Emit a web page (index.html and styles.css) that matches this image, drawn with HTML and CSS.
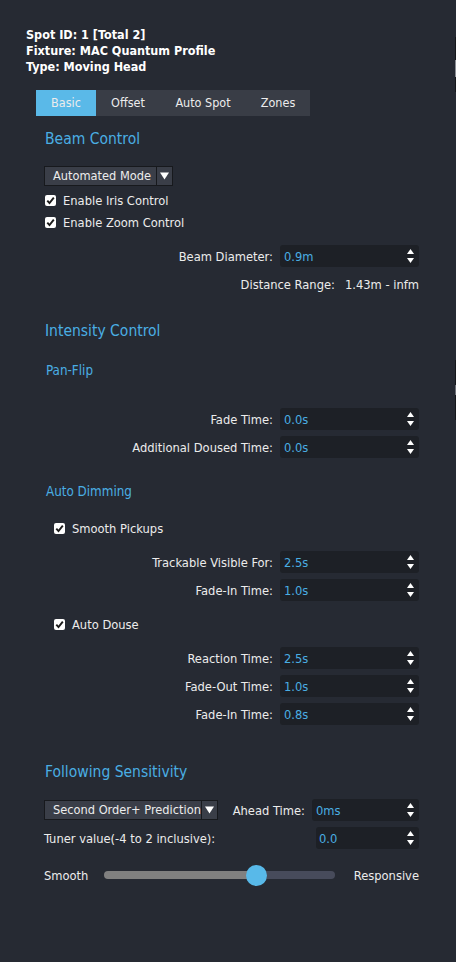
FILE: index.html
```html
<!DOCTYPE html>
<html>
<head>
<meta charset="utf-8">
<link rel="stylesheet" href="styles.css">
</head>
<body>
<div class="edge"><span class="edge-a"></span><span class="edge-b"></span><span class="edge-c"></span><span class="edge-d"></span></div>
<div class="header">
  <div>Spot ID: 1 [Total 2]</div>
  <div>Fixture: MAC Quantum Profile</div>
  <div>Type: Moving Head</div>
</div>
<div class="tabs">
  <div class="tab tab-basic active">Basic</div>
  <div class="tab tab-offset">Offset</div>
  <div class="tab tab-auto">Auto Spot</div>
  <div class="tab tab-zones">Zones</div>
</div>
<div class="content">
  <div class="h1 h1-beam">Beam Control</div>
  <div class="combo combo-mode"><span class="combo-text">Automated Mode</span><span class="combo-btn"><svg width="9" height="8" viewBox="0 0 9 8"><polygon points="0,0.5 9,0.5 4.5,7.5" fill="#fff"/></svg></span></div>
  <div class="check check-first"><span class="box"><svg width="11" height="11" viewBox="0 0 11 11"><path d="M2.3 5.6 L4.5 8.1 L8.8 2.6" fill="none" stroke="#1b1b1b" stroke-width="1.9"/></svg></span>Enable Iris Control</div>
  <div class="check"><span class="box"><svg width="11" height="11" viewBox="0 0 11 11"><path d="M2.3 5.6 L4.5 8.1 L8.8 2.6" fill="none" stroke="#1b1b1b" stroke-width="1.9"/></svg></span>Enable Zoom Control</div>
  <div class="spin-group group-beam">
    <div class="spin-row"><span class="label">Beam Diameter:</span><div class="spin"><span class="val">0.9m</span><svg class="arrows" width="7" height="14" viewBox="0 0 7 14"><polygon points="0,5 3.5,0 7,5" fill="#fff"/><polygon points="0,9 7,9 3.5,14" fill="#fff"/></svg></div></div>
  </div>
  <div class="info-row"><span>Distance Range:</span><span>1.43m - infm</span></div>

  <div class="h1 h1-intensity">Intensity Control</div>
  <div class="h2 h2-panflip">Pan-Flip</div>
  <div class="spin-group group-panflip">
    <div class="spin-row"><span class="label">Fade Time:</span><div class="spin"><span class="val">0.0s</span><svg class="arrows" width="7" height="14" viewBox="0 0 7 14"><polygon points="0,5 3.5,0 7,5" fill="#fff"/><polygon points="0,9 7,9 3.5,14" fill="#fff"/></svg></div></div>
    <div class="spin-row"><span class="label">Additional Doused Time:</span><div class="spin"><span class="val">0.0s</span><svg class="arrows" width="7" height="14" viewBox="0 0 7 14"><polygon points="0,5 3.5,0 7,5" fill="#fff"/><polygon points="0,9 7,9 3.5,14" fill="#fff"/></svg></div></div>
  </div>
  <div class="h2 h2-dimming">Auto Dimming</div>
  <div class="check check-indent check-pickups"><span class="box"><svg width="11" height="11" viewBox="0 0 11 11"><path d="M2.3 5.6 L4.5 8.1 L8.8 2.6" fill="none" stroke="#1b1b1b" stroke-width="1.9"/></svg></span>Smooth Pickups</div>
  <div class="spin-group group-pickups">
    <div class="spin-row"><span class="label">Trackable Visible For:</span><div class="spin"><span class="val">2.5s</span><svg class="arrows" width="7" height="14" viewBox="0 0 7 14"><polygon points="0,5 3.5,0 7,5" fill="#fff"/><polygon points="0,9 7,9 3.5,14" fill="#fff"/></svg></div></div>
    <div class="spin-row"><span class="label">Fade-In Time:</span><div class="spin"><span class="val">1.0s</span><svg class="arrows" width="7" height="14" viewBox="0 0 7 14"><polygon points="0,5 3.5,0 7,5" fill="#fff"/><polygon points="0,9 7,9 3.5,14" fill="#fff"/></svg></div></div>
  </div>
  <div class="check check-indent check-douse"><span class="box"><svg width="11" height="11" viewBox="0 0 11 11"><path d="M2.3 5.6 L4.5 8.1 L8.8 2.6" fill="none" stroke="#1b1b1b" stroke-width="1.9"/></svg></span>Auto Douse</div>
  <div class="spin-group group-douse">
    <div class="spin-row"><span class="label">Reaction Time:</span><div class="spin"><span class="val">2.5s</span><svg class="arrows" width="7" height="14" viewBox="0 0 7 14"><polygon points="0,5 3.5,0 7,5" fill="#fff"/><polygon points="0,9 7,9 3.5,14" fill="#fff"/></svg></div></div>
    <div class="spin-row"><span class="label">Fade-Out Time:</span><div class="spin"><span class="val">1.0s</span><svg class="arrows" width="7" height="14" viewBox="0 0 7 14"><polygon points="0,5 3.5,0 7,5" fill="#fff"/><polygon points="0,9 7,9 3.5,14" fill="#fff"/></svg></div></div>
    <div class="spin-row"><span class="label">Fade-In Time:</span><div class="spin"><span class="val">0.8s</span><svg class="arrows" width="7" height="14" viewBox="0 0 7 14"><polygon points="0,5 3.5,0 7,5" fill="#fff"/><polygon points="0,9 7,9 3.5,14" fill="#fff"/></svg></div></div>
  </div>

  <div class="h1 h1-following">Following Sensitivity</div>
  <div class="follow-row">
    <div class="combo combo-follow"><span class="combo-text">Second Order+ Prediction</span><span class="combo-btn"><svg width="9" height="8" viewBox="0 0 9 8"><polygon points="0,0.5 9,0.5 4.5,7.5" fill="#fff"/></svg></span></div>
    <span class="label ahead-label">Ahead Time:</span>
    <div class="spin spin-ahead"><span class="val">0ms</span><svg class="arrows" width="7" height="14" viewBox="0 0 7 14"><polygon points="0,5 3.5,0 7,5" fill="#fff"/><polygon points="0,9 7,9 3.5,14" fill="#fff"/></svg></div>
  </div>
  <div class="tuner-row">
    <span class="label">Tuner value(-4 to 2 inclusive):</span>
    <div class="spin spin-tuner"><span class="val">0.0</span><svg class="arrows" width="7" height="14" viewBox="0 0 7 14"><polygon points="0,5 3.5,0 7,5" fill="#fff"/><polygon points="0,9 7,9 3.5,14" fill="#fff"/></svg></div>
  </div>
  <div class="slider-row">
    <span class="slider-min">Smooth</span>
    <div class="track"><span class="handle"></span></div>
    <span class="slider-max">Responsive</span>
  </div>
</div>
</body>
</html>
```
FILE: styles.css
```css
html, body {
  margin: 0;
  padding: 0;
}
body {
  position: relative;
  width: 456px;
  height: 962px;
  overflow: hidden;
  background: #262a33;
  color: #ececec;
  font-family: "DejaVu Sans Condensed", "DejaVu Sans", sans-serif;
  font-stretch: condensed;
  font-size: 12.8px;
}

.edge { position: absolute; right: 0; top: 0; width: 1px; height: 962px; }
.edge span { position: absolute; left: 0; width: 1px; }
.edge-a { top: 37px; height: 55px; background: #15171b; }
.edge-b { top: 60px; height: 17px; background: #8a8d94; }
.edge-c { top: 360px; height: 60px; background: #15171b; }
.edge-d { top: 385px; height: 10px; background: #6d7078; }

.header {
  padding: 27px 0 0 26px;
  font-weight: bold;
  font-size: 12.5px;
  color: #ffffff;
  line-height: 16px;
}

.tabs {
  display: flex;
  margin: 15px 0 0 36px;
  width: 274px;
  height: 26px;
  background: #393d46;
  font-size: 12.5px;
}
.tab {
  line-height: 26px;
  text-align: center;
  color: #ececec;
}
.tab-basic { width: 60px; }
.tab-offset { width: 64px; }
.tab-auto { width: 86px; }
.tab-zones { width: 64px; }
.tab.active { background: #5ab9e8; }

.content {
  padding: 0 37px 0 44px;
}

.h1 {
  color: #4aaee3;
  font-size: 15.5px;
  line-height: 20px;
  height: 20px;
  padding-left: 1px;
}
.h1-beam { margin-top: 13px; }
.h1-intensity { margin-top: 26px; }
.h1-following { margin-top: 37px; }

.h2 {
  color: #4aaee3;
  font-size: 13.3px;
  line-height: 18px;
  height: 18px;
  padding-left: 2px;
}
.h2-panflip { margin-top: 21px; }
.h2-dimming { margin-top: 25px; }

.combo {
  display: flex;
  height: 20px;
  box-sizing: border-box;
  border: 1px solid #17191d;
  background: #3a3e48;
  color: #ececec;
  font-size: 12.7px;
}
.combo-text {
  flex: 1;
  padding-left: 8px;
  line-height: 18px;
  white-space: nowrap;
  overflow: hidden;
}
.combo-btn {
  width: 15px;
  border-left: 1px solid #17191d;
  display: flex;
  align-items: center;
  justify-content: center;
}
.combo-mode { width: 129px; margin-top: 17px; }
.combo-follow { width: 174px; }

.check {
  display: flex;
  align-items: center;
  height: 22px;
  gap: 7px;
  padding-left: 1px;
  color: #ececec;
}
.check-first { margin-top: 3px; }
.check-indent { padding-left: 10px; }
.check-pickups { margin-top: 16px; }
.check-douse { margin-top: 12px; }
.box {
  width: 11px;
  height: 11px;
  background: #ffffff;
  border-radius: 2px;
  display: flex;
}

.spin-group {
  display: flex;
  flex-direction: column;
  gap: 6px;
}
.group-beam { margin-top: 12px; }
.group-panflip { margin-top: 28px; }
.group-pickups { margin-top: 12px; }
.group-douse { margin-top: 12px; }

.spin-row {
  display: flex;
  justify-content: flex-end;
  align-items: center;
  gap: 7px;
  height: 22px;
}
.label {
  color: #ececec;
  white-space: nowrap;
}
.spin {
  width: 139px;
  height: 22px;
  box-sizing: border-box;
  background: #1d2026;
  border-radius: 3px;
  display: flex;
  align-items: center;
  padding: 0 5px 0 4px;
}
.val {
  color: #4aaee3;
  flex: 1;
}
.arrows { display: block; }

.info-row {
  margin-top: 6px;
  height: 22px;
  display: flex;
  justify-content: flex-end;
  align-items: center;
  gap: 10px;
}

.follow-row {
  margin-top: 17px;
  height: 22px;
  display: flex;
  align-items: center;
}
.ahead-label { margin-left: auto; margin-right: 7px; }
.spin-ahead { width: 107px; }

.tuner-row {
  margin-top: 6px;
  height: 22px;
  display: flex;
  align-items: center;
  justify-content: space-between;
}
.spin-tuner { width: 103px; padding-left: 3px; }

.slider-row {
  margin-top: 15px;
  height: 22px;
  display: flex;
  align-items: center;
}
.slider-min { width: 60px; }
.track {
  position: relative;
  width: 231px;
  height: 8px;
  border-radius: 4px;
  background: linear-gradient(to right, #808080 0, #808080 153px, #474b5b 153px);
}
.handle {
  position: absolute;
  left: 142px;
  top: -6.5px;
  width: 21px;
  height: 21px;
  border-radius: 50%;
  background: #58b9e9;
}
.slider-max { margin-left: auto; }
```
